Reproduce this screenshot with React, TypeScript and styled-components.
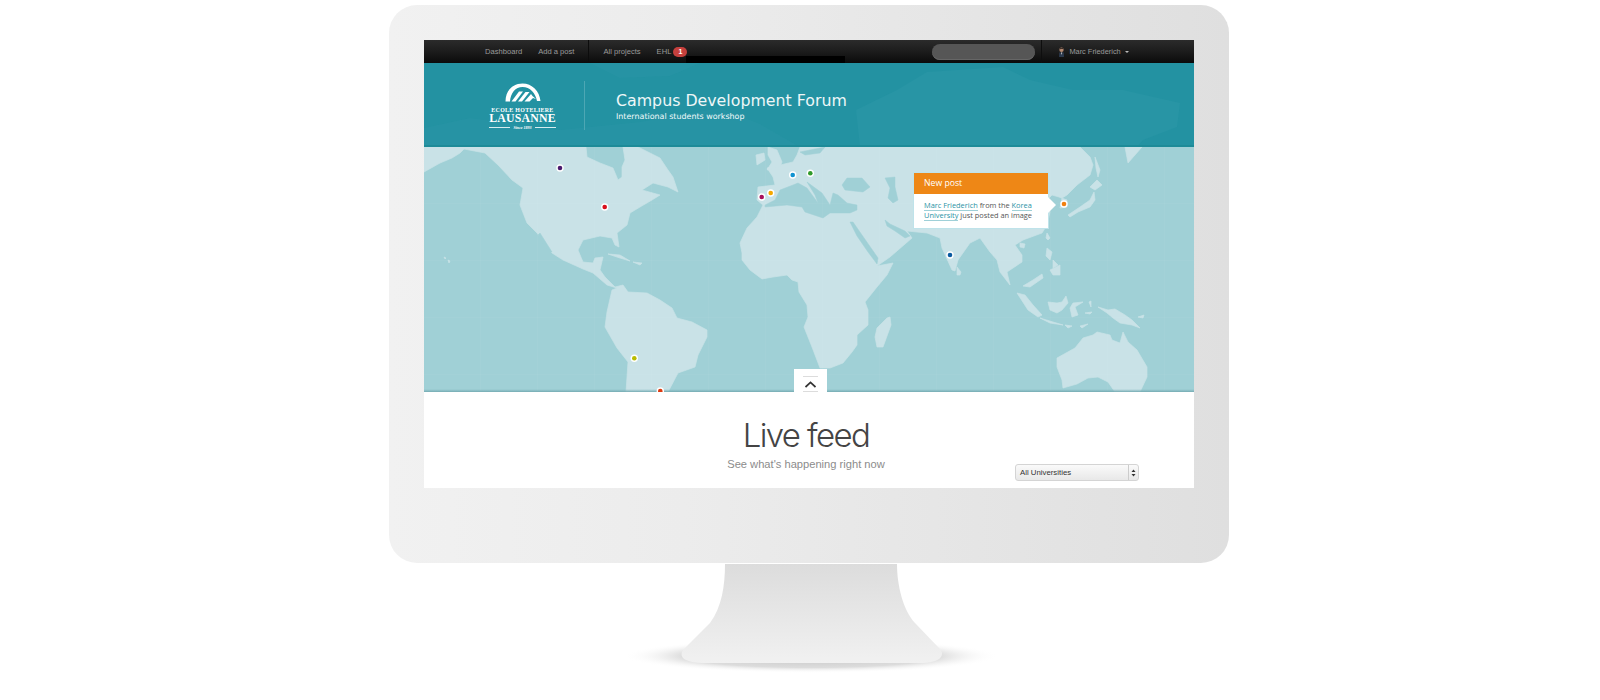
import React from "react";
import styled, { createGlobalStyle } from "styled-components";

const Global = createGlobalStyle`
  html, body { margin: 0; padding: 0; background: #fff; }
  body { font-family: "Liberation Sans", Arial, sans-serif; }
`;

const Page = styled.div`
  width: 1600px;
  height: 700px;
  overflow: hidden;
  padding: 5px 0 0 389px;
  box-sizing: border-box;
  background: #fff;
`;
const Imac = styled.div`
  width: 840px;
  display: flex;
  flex-direction: column;
  align-items: center;
`;
const Bezel = styled.div`
  width: 840px;
  height: 558px;
  box-sizing: border-box;
  padding: 35px 35px 75px;
  border-radius: 28px;
  background: linear-gradient(90deg, #f1f1f1 0%, #ececec 35%, #e6e6e6 65%, #dfdfdf 100%);
`;
const Screen = styled.div`
  width: 770px;
  height: 448px;
  display: flex;
  flex-direction: column;
  background: #fff;
  overflow: hidden;
`;
const NavBar = styled.nav`
  position: relative;
  height: 23px;
  flex: none;
  display: flex;
  align-items: center;
  padding-left: 61px;
  background: linear-gradient(180deg, #2b2b2b 0%, #1c1c1c 50%, #0b0b0b 100%);
  font-size: 7.6px;
  color: #9a9a9a;
`;
const NavLink = styled.a<{ $gap?: number }>`
  margin-right: ${(p) => p.$gap ?? 0}px;
  white-space: nowrap;
  position: relative;
  top: -0.5px;
`;
const NavDivider = styled.span`
  width: 1px;
  height: 23px;
  background: #0c0c0c;
  margin-right: 14px;
`;
const Badge = styled.span`
  width: 14px;
  height: 10px;
  margin-left: 2px;
  border-radius: 5px;
  background: #c5403d;
  color: #fff;
  font-size: 7px;
  font-weight: 700;
  display: flex;
  align-items: center;
  justify-content: center;
`;
const BlackStrip = styled.span`
  position: absolute;
  left: 262px;
  top: 16px;
  width: 159px;
  height: 7px;
  background: #000;
`;
const SearchPill = styled.span`
  width: 103px;
  height: 16px;
  margin-left: 245px;
  border-radius: 8px;
  background: #565656;
  box-shadow: inset 0 -1px 0 #666;
`;
const UserBox = styled.div`
  display: flex;
  align-items: center;
  height: 23px;
  margin-left: 6px;
  padding-left: 16px;
  border-left: 1px solid #0e0e0e;
`;
const UserName = styled.span`
  margin-left: 3px;
  font-size: 7.4px;
  white-space: nowrap;
`;
const Caret = styled.span`
  margin-left: 4px;
  border-left: 2.5px solid transparent;
  border-right: 2.5px solid transparent;
  border-top: 2.5px solid #bbb;
`;
const Header = styled.header`
  position: relative;
  height: 84px;
  flex: none;
  box-sizing: border-box;
  display: flex;
  align-items: center;
  padding-left: 65px;
  background: #2392a2;
  border-bottom: 2px solid #1d8b98;
  overflow: hidden;
`;
const Watermark = styled.svg`
  position: absolute;
  left: 0;
  top: 0;
`;
const LogoBlock = styled.div`
  position: relative;
  width: 67px;
  margin-top: 5px;
  display: flex;
  flex-direction: column;
  align-items: center;
  color: #fff;
  font-family: "Liberation Serif", serif;
`;
const LogoSmall = styled.div`
  font-size: 5.9px;
  font-weight: 700;
  letter-spacing: 0.32px;
  line-height: 6px;
  margin-top: 4px;
  white-space: nowrap;
`;
const LogoBig = styled.div`
  font-size: 11.8px;
  font-weight: 700;
  letter-spacing: 0.2px;
  line-height: 11px;
  white-space: nowrap;
`;
const LogoSince = styled.div`
  width: 67px;
  margin-top: 1px;
  display: flex;
  align-items: center;
  gap: 3px;
  font-size: 4px;
  font-style: italic;
  font-weight: 700;
  line-height: 6px;
  white-space: nowrap;
  &::before, &::after {
    content: "";
    flex: 1;
    height: 1px;
    background: #d5ecef;
  }
`;
const HeaderDivider = styled.span`
  position: relative;
  width: 1px;
  height: 49px;
  margin: 2px 31px 0 28px;
  background: #4da7b4;
`;
const TitleBlock = styled.div`
  position: relative;
  color: #fff;
  font-family: "DejaVu Sans", Verdana, sans-serif;
  margin-top: 5px;
`;
const Title = styled.h1`
  margin: 0;
  font-size: 15.8px;
  font-weight: 400;
  line-height: 20px;
  color: #eef7f8;
  white-space: nowrap;
`;
const Subtitle = styled.div`
  font-size: 7.95px;
  line-height: 12px;
  color: #f2f9fa;
  white-space: nowrap;
`;
const MapSection = styled.section`
  position: relative;
  height: 245px;
  flex: none;
  overflow: hidden;
  background: #a0d0d6;
`;
const MapSvg = styled.svg`
  display: block;
`;
const Callout = styled.div`
  position: absolute;
  left: 489px;
  top: 25px;
  width: 136px;
  box-sizing: border-box;
  background: #fff;
  border: 1px solid #bfe3ea;
  font-family: "Open Sans", sans-serif;
  &::after {
    content: "";
    position: absolute;
    left: 134px;
    top: 24px;
    border-left: 8px solid #fff;
    border-top: 8px solid transparent;
    border-bottom: 8px solid transparent;
  }
`;
const CalloutHead = styled.div`
  height: 21px;
  padding-left: 10px;
  background: #ee8716;
  color: #fff;
  font-size: 8.7px;
  font-weight: 400;
  line-height: 21px;
`;
const CalloutBody = styled.div`
  padding: 6px 8px 7px 10px;
  font-size: 7.4px;
  line-height: 10.4px;
  color: #555;
  white-space: nowrap;
`;
const PersonLink = styled.a`
  color: #2b93a5;
  border-bottom: 1px solid #9fd0d8;
`;
const UpTab = styled.button`
  position: absolute;
  left: 370px;
  bottom: 0;
  width: 33px;
  height: 23px;
  padding: 7px 0 0;
  box-sizing: border-box;
  border: 0;
  background: #fff;
  display: flex;
  align-items: center;
  justify-content: center;
  &::before, &::after {
    content: "";
    position: absolute;
    left: 9px;
    width: 15px;
    height: 1px;
    background: #dcdcdc;
  }
  &::before { top: 7px; }
  &::after { bottom: 0; }
`;
const FeedSection = styled.section`
  flex: 1;
  display: grid;
  padding-bottom: 7px;
`;
const FeedHeading = styled.div`
  grid-area: 1 / 1;
  justify-self: center;
  text-align: center;
  margin: 22px 6px 0 0;
`;
const FeedTitle = styled.h2`
  margin: 0;
  font-family: Inter, "Liberation Sans", sans-serif;
  font-weight: 300;
  font-size: 33px;
  letter-spacing: -1.6px;
  line-height: 42px;
  color: #444;
`;
const FeedSub = styled.p`
  margin: 1px 0 0;
  font-size: 11.15px;
  line-height: 14px;
  color: #8c8c8c;
`;
const UniSelect = styled.div`
  grid-area: 1 / 1;
  justify-self: end;
  align-self: end;
  width: 124px;
  height: 17px;
  margin-right: 55px;
  box-sizing: border-box;
  border-radius: 3px;
  border: 1px solid #d4d4d4;
  background: linear-gradient(180deg, #fafafa, #e8e8e8);
  display: flex;
  align-items: center;
  font-size: 7.8px;
  color: #333;
  padding-left: 4px;
`;
const UniLabel = styled.span`
  flex: 1;
`;
const Stepper = styled.span`
  width: 9px;
  height: 15px;
  border-left: 1px solid #ccc;
  display: flex;
  align-items: center;
  justify-content: center;
`;

const americas =
  "424,147 424,172 440,163 452,158 460,153 464,149 485,153 498,165 512,180 523,188 520,205 527,223 537,233 552,253 563,260 583,269 593,273 607,285 617,288 612,290 607,312 605,327 617,348 628,362 626,392 668,392 678,373 695,367 698,355 707,337 707,330 692,322 677,318 672,308 660,300 647,293 628,292 623,285 615,287 605,277 600,270 603,257 595,258 593,263 583,262 578,250 583,240 600,236 612,238 615,245 619,247 617,233 627,225 630,213 640,207 652,200 660,195 642,190 653,183 668,187 678,192 673,177 668,170 660,158 650,153 638,147 623,147 625,160 622,167 622,177 618,180 613,168 600,163 587,157 586,147";
const eurafrasia =
  "800,147 797,155 793,162 780,165 767,168 773,177 775,185 758,187 757,200 763,205 757,217 747,228 740,243 742,253 742,260 750,270 762,279 773,277 787,275 792,280 798,282 799,292 807,305 808,317 804,327 812,347 820,368 830,368 843,363 852,352 857,345 857,335 868,325 868,310 865,302 877,287 887,275 893,263 877,266 890,257 912,238 907,231 927,233 940,238 942,248 952,270 955,271 958,260 970,243 980,238 990,252 997,260 1000,272 1010,285 1007,272 1013,268 1022,262 1022,255 1015,245 1023,240 1042,233 1047,225 1050,212 1047,200 1052,195 1059,197 1067,200 1067,207 1060,208 1062,198 1067,195 1077,185 1090,175 1093,165 1090,157 1080,147";
const islands = [
  "768,147 777,150 782,162 780,167 767,170 772,162 768,155",
  "756,155 764,153 765,160 757,165",
  "887,318 890,317 891,325 883,347 877,347 875,337 877,328",
  "957,267 961,272 960,275 957,275",
  "1068,215 1080,207 1090,200 1094,192 1095,200 1090,207 1078,212 1070,217",
  "1090,187 1097,180 1102,185 1095,190",
  "1095,157 1100,170 1098,177 1096,168",
  "1125,147 1128,163 1142,147",
  "1047,233 1050,238 1048,240 1046,238",
  "1020,243 1025,244 1024,248 1020,247",
  "1047,248 1052,252 1050,260 1046,256",
  "1053,260 1058,265 1053,268",
  "1050,270 1060,265 1060,275 1053,275",
  "1048,302 1057,303 1062,302 1066,296 1068,303 1062,310 1057,313 1050,310",
  "1017,293 1025,295 1033,305 1042,315 1038,317 1028,310",
  "1040,318 1053,322 1063,325 1050,323",
  "1023,286 1033,280 1042,274 1043,278 1030,287",
  "1070,308 1073,303 1083,302 1075,307 1078,315 1072,317",
  "1098,307 1108,310 1115,309 1125,315 1132,320 1140,328 1132,325 1120,323 1113,318 1107,313",
  "1065,325 1072,326 1068,328",
  "1080,326 1088,324 1082,328",
  "1085,313 1092,312 1090,314",
  "1143,318 1144,315 1138,317",
  "1089,302 1091,301 1091,307",
  "1057,358 1075,348 1083,338 1093,335 1097,332 1110,335 1112,340 1120,343 1123,332 1128,342 1137,350 1147,367 1147,377 1140,392 1115,392 1108,382 1098,377 1088,378 1077,384 1063,388 1062,380 1057,367",
  "608,254 620,255 630,261 620,258",
  "633,262 642,263 640,265",
  "444,257 446,258 445,259",
  "448,260 450,261 449,263",
];
const seas = [
  "765,205 775,200 780,190 793,185 798,183 807,188 818,203 815,195 807,182 822,193 830,205 833,193 838,195 847,203 857,205 857,210 850,213 830,213 823,218 805,212 802,207 787,205 765,207",
  "842,185 847,178 862,178 870,187 863,192 845,190",
  "885,178 895,177 895,187 898,200 893,203 888,198 890,188",
  "850,222 853,222 862,235 878,258 877,264 868,252 857,236",
  "885,220 890,224 905,231 910,236 905,238 895,231 887,226",
  "800,152 825,147 820,153 805,155",
  "540,233 552,252 548,252 538,235",
];
const pins = [
  { x: 560, y: 168, c: "#4a1a6e" },
  { x: 604.7, y: 207, c: "#d8101c" },
  { x: 792.7, y: 175, c: "#0f93d0" },
  { x: 810.3, y: 173.3, c: "#2f9a2a" },
  { x: 761.7, y: 197, c: "#a8105c" },
  { x: 770.7, y: 193, c: "#f5a800" },
  { x: 634.3, y: 358.3, c: "#b9bc00" },
  { x: 660.3, y: 391, c: "#dc3a10" },
  { x: 950, y: 255, c: "#0a5aa0" },
  { x: 1064, y: 204, c: "#f08010" },
];

const LogoMark = () => (
  <svg width="36" height="20" viewBox="0 0 36 20" fill="#fff" style={{ display: "block" }}>
    <path d="M0.5 18.5C0.5 8 7.5 0.5 17.5 0.5C27 0.5 34.5 8 35.5 18L32 18C30.5 10 25 4 17.5 4C10.5 4 5.5 10 5 18.5Z" />
    <path d="M6.5 18.5L14 8.5L18 8.5L10.5 18.5Z" />
    <path d="M13 18.5L20.5 9L24.5 9L17 18.5Z" />
    <path d="M19.5 18.5L26 11L27.5 13L31 16L28 15L24.5 18.5Z" />
  </svg>
);

const Avatar = () => (
  <svg width="8" height="10" viewBox="0 0 8 10" style={{ display: "block" }}>
    <circle cx="3.5" cy="2.8" r="2.2" fill="#b58a72" />
    <path d="M1.4 2.4C1.6 0.6 5.4 0.4 5.7 2.2L3.5 1.8Z" fill="#2b211c" />
    <path d="M1 10L1.3 5.6L5.8 5.6L6 10Z" fill="#2c3a4e" />
    <path d="M3 5.6L4.2 5.6L3.7 8Z" fill="#e6e6e6" />
  </svg>
);

export default function App() {
  return (
    <Page>
      <Global />
      <Imac>
        <Bezel>
          <Screen>
            <NavBar>
              <NavLink $gap={16}>Dashboard</NavLink>
              <NavLink $gap={14}>Add a post</NavLink>
              <NavDivider />
              <NavLink $gap={16}>All projects</NavLink>
              <NavLink>EHL</NavLink>
              <Badge>1</Badge>
              <BlackStrip />
              <SearchPill />
              <UserBox>
                <Avatar />
                <UserName>Marc Friederich</UserName>
                <Caret />
              </UserBox>
            </NavBar>
            <Header>
              <Watermark width="770" height="84" viewBox="424 63 770 84" fill="#2895a5">
                <polygon points="897,90 927,72 1003,67 1030,80 1073,90 1123,90 1180,103 1177,127 1143,140 1137,147 860,147 856,110" />
                <polygon points="424,128 470,118 560,130 640,122 720,108 760,124 800,147 424,147" opacity="0.6" />
                <polygon points="590,63 700,63 670,76 620,78" opacity="0.6" />
              </Watermark>
              <LogoBlock>
                <LogoMark />
                <LogoSmall>ECOLE HOTELIERE</LogoSmall>
                <LogoBig>LAUSANNE</LogoBig>
                <LogoSince>Since 1893</LogoSince>
              </LogoBlock>
              <HeaderDivider />
              <TitleBlock>
                <Title>Campus Development Forum</Title>
                <Subtitle>International students workshop</Subtitle>
              </TitleBlock>
            </Header>
            <MapSection>
              <MapSvg width="770" height="245" viewBox="424 147 770 245">
                <defs>
                  <pattern id="mapgrid" x="424" y="147" width="57" height="57" patternUnits="userSpaceOnUse">
                    <path d="M57 0V57M0 57H57" stroke="#fff" strokeOpacity="0.05" fill="none" />
                  </pattern>
                  <linearGradient id="mapedge" x1="0" y1="0" x2="0" y2="1">
                    <stop offset="0" stopColor="#7fb4bb" stopOpacity="0" />
                    <stop offset="1" stopColor="#74aab2" />
                  </linearGradient>
                </defs>
                <g fill="#c9e2e7" stroke="#c9e2e7" strokeWidth="0.7" strokeLinejoin="round">
                  <polygon points={americas} />
                  <polygon points={eurafrasia} />
                  {islands.map((p) => (
                    <polygon key={p} points={p} />
                  ))}
                </g>
                <g fill="#a0d0d6" stroke="#a0d0d6" strokeWidth="0.5" strokeLinejoin="round">
                  {seas.map((p) => (
                    <polygon key={p} points={p} />
                  ))}
                </g>
                <rect x="424" y="147" width="770" height="245" fill="url(#mapgrid)" />
                <rect x="424" y="389" width="770" height="3" fill="url(#mapedge)" />
                {pins.map((p) => (
                  <g key={p.c}>
                    <circle cx={p.x} cy={p.y} r="3.7" fill="#fff" />
                    <circle cx={p.x} cy={p.y} r="2.3" fill={p.c} />
                  </g>
                ))}
              </MapSvg>
              <Callout>
                <CalloutHead>New post</CalloutHead>
                <CalloutBody>
                  <PersonLink>Marc Friederich</PersonLink> from the <PersonLink>Korea</PersonLink>
                  <br />
                  <PersonLink>University</PersonLink> just posted an image
                </CalloutBody>
              </Callout>
              <UpTab aria-label="Collapse map">
                <svg width="11" height="7" viewBox="0 0 11 7" fill="none" stroke="#333" strokeWidth="1.7">
                  <polyline points="0.5,6 5.5,1.4 10.5,6" />
                </svg>
              </UpTab>
            </MapSection>
            <FeedSection>
              <FeedHeading>
                <FeedTitle>Live feed</FeedTitle>
                <FeedSub>See what's happening right now</FeedSub>
              </FeedHeading>
              <UniSelect>
                <UniLabel>All Universities</UniLabel>
                <Stepper>
                  <svg width="5" height="8" viewBox="0 0 5 8" fill="#333">
                    <polygon points="2.5,0.5 4.5,3 0.5,3" />
                    <polygon points="2.5,7.5 4.5,5 0.5,5" />
                  </svg>
                </Stepper>
              </UniSelect>
            </FeedSection>
          </Screen>
        </Bezel>
        <svg width="380" height="125" viewBox="619 563 380 125" style={{ display: "block", flex: "none" }}>
          <defs>
            <linearGradient id="neck" x1="0" y1="0" x2="0" y2="1">
              <stop offset="0" stopColor="#dcdcdc" />
              <stop offset="1" stopColor="#f1f1f1" />
            </linearGradient>
            <radialGradient id="standshadow">
              <stop offset="0" stopColor="#c2c2c2" />
              <stop offset="0.68" stopColor="#d6d6d6" stopOpacity="0.85" />
              <stop offset="1" stopColor="#ffffff" stopOpacity="0" />
            </radialGradient>
          </defs>
          <ellipse cx="811" cy="656" rx="188" ry="17" fill="url(#standshadow)" />
          <path
            d="M725 564C725 585 722 607 710 623L684 649C680 653 681 658 686 660C690 662 696 663 702 663L920 663C930 663 938 661 941 657C943 654 942 651 939 648L915 623C903 610 897 585 897 564Z"
            fill="url(#neck)"
          />
        </svg>
      </Imac>
    </Page>
  );
}
